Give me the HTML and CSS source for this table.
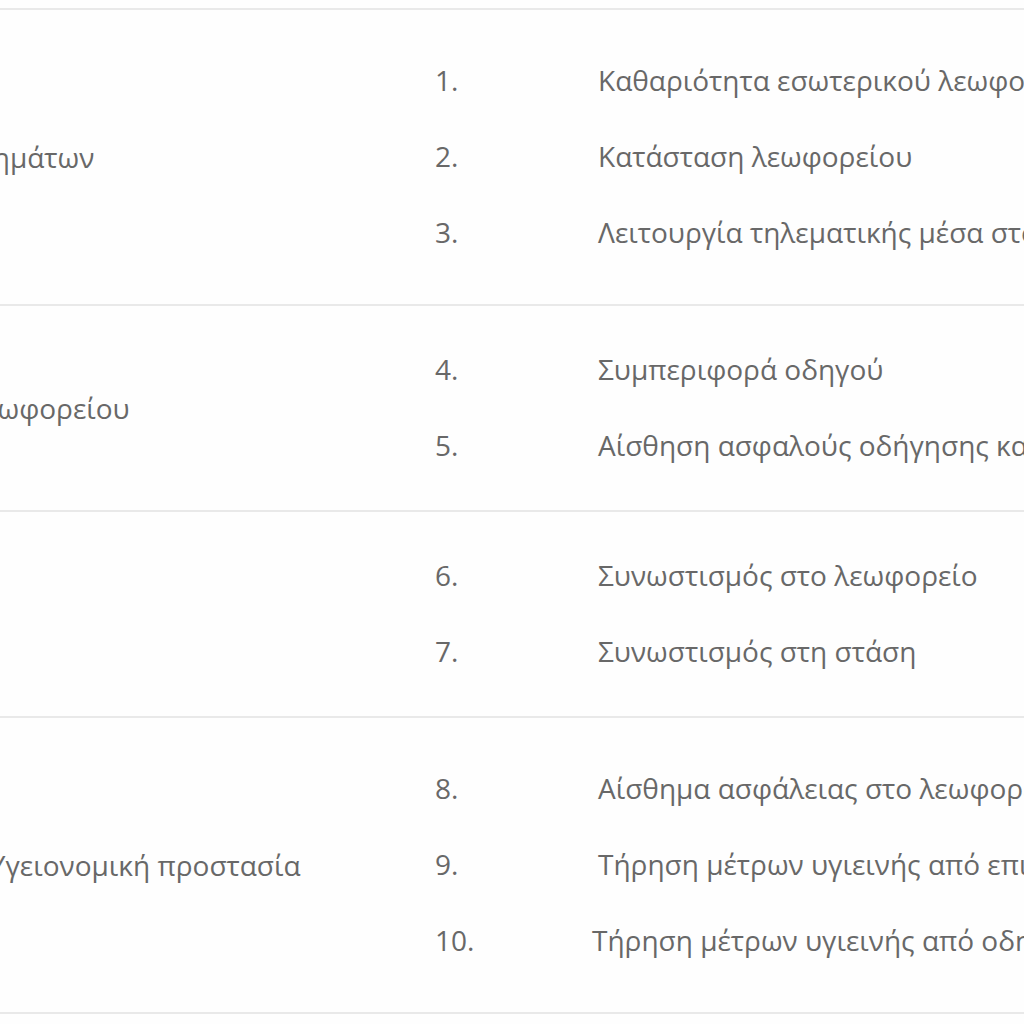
FILE: index.html
```html
<!DOCTYPE html>
<html lang="el">
<head>
<meta charset="utf-8">
<title>Κριτήρια ποιότητας</title>
<link rel="stylesheet" href="styles.css">
</head>
<body>
<div class="table">
  <div class="row">
    <div class="cat">Κατάσταση οχημάτων</div>
    <div class="items">
      <div class="item"><span class="num">1.</span><span class="text">Καθαριότητα εσωτερικού λεωφορείου</span></div>
      <div class="item"><span class="num">2.</span><span class="text">Κατάσταση λεωφορείου</span></div>
      <div class="item"><span class="num">3.</span><span class="text">Λειτουργία τηλεματικής μέσα στο λεωφορείο</span></div>
    </div>
  </div>
  <div class="row two">
    <div class="cat">Οδηγός του λεωφορείου</div>
    <div class="items">
      <div class="item"><span class="num">4.</span><span class="text">Συμπεριφορά οδηγού</span></div>
      <div class="item"><span class="num">5.</span><span class="text">Αίσθηση ασφαλούς οδήγησης και άνεσης</span></div>
    </div>
  </div>
  <div class="row two">
    <div class="cat">Συνωστισμός</div>
    <div class="items">
      <div class="item"><span class="num">6.</span><span class="text">Συνωστισμός στο λεωφορείο</span></div>
      <div class="item"><span class="num">7.</span><span class="text">Συνωστισμός στη στάση</span></div>
    </div>
  </div>
  <div class="row">
    <div class="cat">Ασφάλεια και Υγειονομική προστασία</div>
    <div class="items">
      <div class="item"><span class="num">8.</span><span class="text">Αίσθημα ασφάλειας στο λεωφορείο</span></div>
      <div class="item"><span class="num">9.</span><span class="text">Τήρηση μέτρων υγιεινής από επιβάτες</span></div>
      <div class="item"><span class="num">10.</span><span class="text shift">Τήρηση μέτρων υγιεινής από οδηγούς</span></div>
    </div>
  </div>
</div>
</body>
</html>
```
FILE: styles.css
```css
html, body {
  margin: 0;
  padding: 0;
  background: #fefefe;
  overflow: hidden;
}
body {
  width: 1024px;
  height: 1024px;
  font-family: "Open Sans", "Noto Sans", sans-serif;
  font-size: 28px;
  color: #686868;
}
.table {
  margin-top: 8px;
  margin-left: -193px;
  width: 1800px;
  border-top: 2px solid #e9e9e9;
}
.row {
  display: flex;
  border-bottom: 2px solid #e9e9e9;
}
.cat {
  width: 628px;
  flex: none;
  display: flex;
  align-items: center;
  white-space: nowrap;
}
.items {
  padding: 32px 0 34px;
}
.row.two .items {
  padding: 25px 0 27px;
}
.item {
  height: 76px;
  display: flex;
  align-items: center;
  white-space: nowrap;
}
.num {
  width: 163px;
  flex: none;
}
.shift {
  margin-left: -6px;
}
```
